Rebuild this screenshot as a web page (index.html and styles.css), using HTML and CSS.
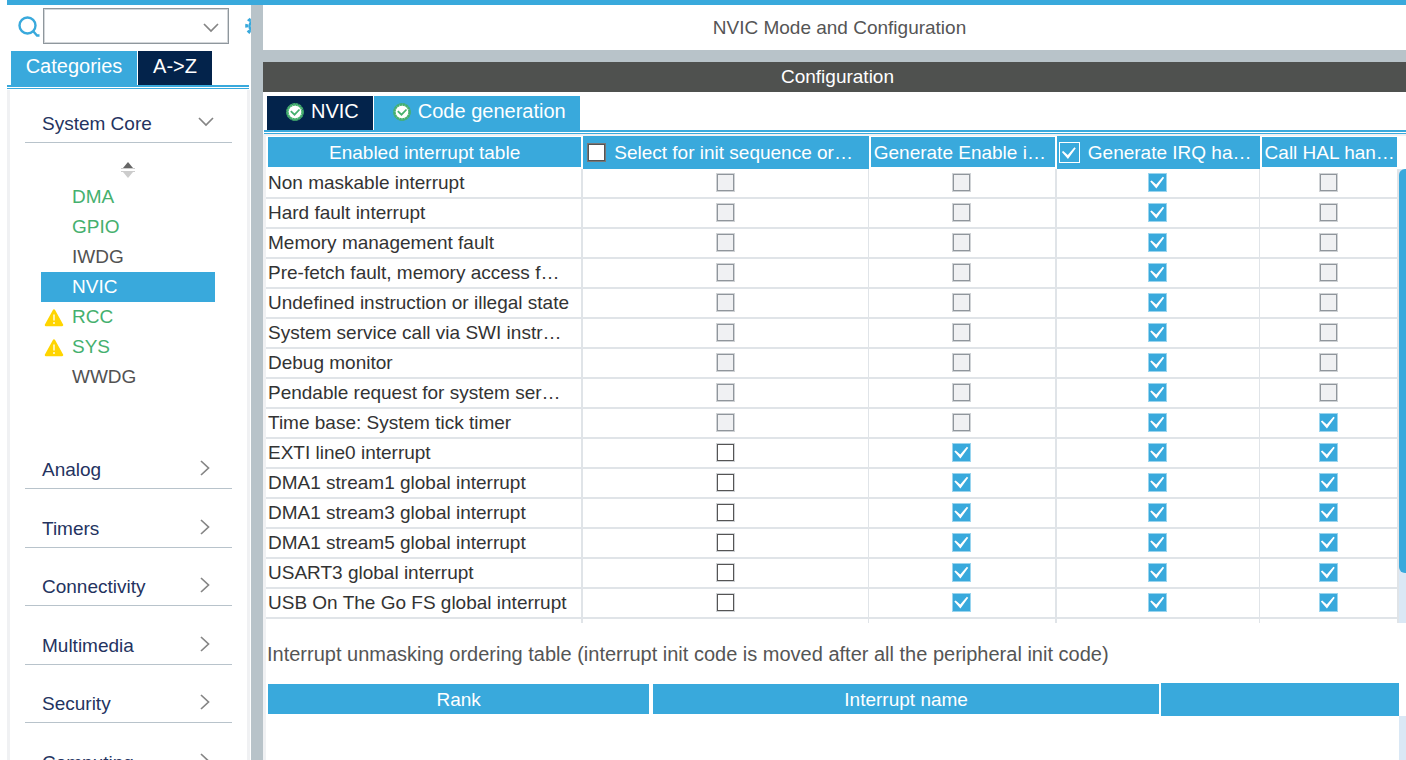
FILE: index.html
```html
<!DOCTYPE html>
<html lang="en">
<head>
<meta charset="utf-8">
<title>NVIC Mode and Configuration</title>
<link rel="stylesheet" href="styles.css">
</head>
<body>
<svg class="defs" aria-hidden="true">
  <symbol id="right" viewBox="0 0 10 16"><path d="M1 1l7.500 7L1 15" fill="none" stroke="#858585" stroke-width="1.700"/></symbol>
  <symbol id="down" viewBox="0 0 16 10"><path d="M1 1l7 7 7-7" fill="none" stroke="#858585" stroke-width="1.700"/></symbol>
  <symbol id="ok" viewBox="0 0 18 18"><circle cx="9" cy="9" r="7.600" fill="#fff" stroke="#45b06e" stroke-width="2.600" stroke-dasharray="2.700 .3"/><path d="M4.800 8.200l3.700 3.500 5-5.200" fill="none" stroke="#45b06e" stroke-width="1.800"/></symbol>
  <symbol id="warn" viewBox="0 0 20 18"><path d="M10 1.500L18 16H2z" fill="#ffd500" stroke="#ffd500" stroke-width="2.500" stroke-linejoin="round"/><path d="M10 5.500v6M10 13v2" stroke="#fff" stroke-width="1.300"/></symbol>
</svg>
<div class="app">
  <aside class="sidebar">
    <div class="search">
      <svg class="search-icon" viewBox="0 0 22 22"><circle cx="9.500" cy="9.500" r="8" fill="none" stroke="#39a9dc" stroke-width="2.400"/><path d="M15 15l4 4.500h2.500" fill="none" stroke="#39a9dc" stroke-width="2.400"/></svg>
      <div class="combo"><input type="text" class="combo-input" aria-label="Search peripherals"><svg class="down"><use href="#down"/></svg></div>
      <button class="gear" aria-label="Settings"><svg viewBox="0 0 20 20"><circle cx="10" cy="10" r="5.500" fill="none" stroke="#39a9dc" stroke-width="2.500"/><circle cx="10" cy="10" r="8.300" fill="none" stroke="#39a9dc" stroke-width="3" stroke-dasharray="3.300 3.220" stroke-dashoffset="1.600"/></svg></button>
    </div>
    <div class="tabs side-tabs"><button class="tab">Categories</button><button class="tab dark">A-&gt;Z</button></div>
    <nav class="tree">
      <button class="group first">System Core<svg class="down"><use href="#down"/></svg></button>
      <div class="members">
        <button class="sort" aria-label="Sort"><svg viewBox="0 0 14 16"><path d="M7 0l5 6H2z" fill="#666"/><path d="M0 6.500h14M0 9.500h14" stroke="#ccc"/><path d="M2 10h10l-5 6z" fill="#ccc"/></svg></button>
        <button class="item on">DMA</button>
        <button class="item on">GPIO</button>
        <button class="item">IWDG</button>
        <button class="item selected">NVIC</button>
        <button class="item on"><svg class="warn"><use href="#warn"/></svg>RCC</button>
        <button class="item on"><svg class="warn"><use href="#warn"/></svg>SYS</button>
        <button class="item">WWDG</button>
      </div>
      <button class="group">Analog<svg class="right"><use href="#right"/></svg></button>
      <button class="group">Timers<svg class="right"><use href="#right"/></svg></button>
      <button class="group short">Connectivity<svg class="right"><use href="#right"/></svg></button>
      <button class="group">Multimedia<svg class="right"><use href="#right"/></svg></button>
      <button class="group short">Security<svg class="right"><use href="#right"/></svg></button>
      <button class="group">Computing<svg class="right"><use href="#right"/></svg></button>
    </nav>
  </aside>
  <main class="main">
    <h1 class="title">NVIC Mode and Configuration</h1>
    <h2 class="bar">Configuration</h2>
    <div class="tabs main-tabs"><button class="tab dark"><svg class="ok"><use href="#ok"/></svg>NVIC</button><button class="tab"><svg class="ok"><use href="#ok"/></svg>Code generation</button></div>
    <div class="panel">
      <div class="scroller">
        <table class="grid">
          <colgroup><col class="c-name"><col class="c-init"><col class="c-enable"><col class="c-irq"><col class="c-hal"></colgroup>
          <thead><tr>
            <th>Enabled interrupt table</th>
            <th class="flush"><label class="pick"><input type="checkbox" class="plain">Select for init sequence or…</label></th>
            <th class="left">Generate Enable i…</th>
            <th class="flush"><label class="pick"><input type="checkbox" class="outlined" checked>Generate IRQ ha…</label></th>
            <th class="left">Call HAL han…</th>
          </tr></thead>
          <tbody>
            <tr><td>Non maskable interrupt</td><td><input type="checkbox" aria-label="Init sequence" disabled></td><td><input type="checkbox" aria-label="Enable" disabled></td><td><input type="checkbox" aria-label="IRQ handler" checked></td><td><input type="checkbox" aria-label="HAL handler" disabled></td></tr>
            <tr><td>Hard fault interrupt</td><td><input type="checkbox" aria-label="Init sequence" disabled></td><td><input type="checkbox" aria-label="Enable" disabled></td><td><input type="checkbox" aria-label="IRQ handler" checked></td><td><input type="checkbox" aria-label="HAL handler" disabled></td></tr>
            <tr><td>Memory management fault</td><td><input type="checkbox" aria-label="Init sequence" disabled></td><td><input type="checkbox" aria-label="Enable" disabled></td><td><input type="checkbox" aria-label="IRQ handler" checked></td><td><input type="checkbox" aria-label="HAL handler" disabled></td></tr>
            <tr><td>Pre-fetch fault, memory access f…</td><td><input type="checkbox" aria-label="Init sequence" disabled></td><td><input type="checkbox" aria-label="Enable" disabled></td><td><input type="checkbox" aria-label="IRQ handler" checked></td><td><input type="checkbox" aria-label="HAL handler" disabled></td></tr>
            <tr><td>Undefined instruction or illegal state</td><td><input type="checkbox" aria-label="Init sequence" disabled></td><td><input type="checkbox" aria-label="Enable" disabled></td><td><input type="checkbox" aria-label="IRQ handler" checked></td><td><input type="checkbox" aria-label="HAL handler" disabled></td></tr>
            <tr><td>System service call via SWI instr…</td><td><input type="checkbox" aria-label="Init sequence" disabled></td><td><input type="checkbox" aria-label="Enable" disabled></td><td><input type="checkbox" aria-label="IRQ handler" checked></td><td><input type="checkbox" aria-label="HAL handler" disabled></td></tr>
            <tr><td>Debug monitor</td><td><input type="checkbox" aria-label="Init sequence" disabled></td><td><input type="checkbox" aria-label="Enable" disabled></td><td><input type="checkbox" aria-label="IRQ handler" checked></td><td><input type="checkbox" aria-label="HAL handler" disabled></td></tr>
            <tr><td>Pendable request for system ser…</td><td><input type="checkbox" aria-label="Init sequence" disabled></td><td><input type="checkbox" aria-label="Enable" disabled></td><td><input type="checkbox" aria-label="IRQ handler" checked></td><td><input type="checkbox" aria-label="HAL handler" disabled></td></tr>
            <tr><td>Time base: System tick timer</td><td><input type="checkbox" aria-label="Init sequence" disabled></td><td><input type="checkbox" aria-label="Enable" disabled></td><td><input type="checkbox" aria-label="IRQ handler" checked></td><td><input type="checkbox" aria-label="HAL handler" checked></td></tr>
            <tr><td>EXTI line0 interrupt</td><td><input type="checkbox" aria-label="Init sequence"></td><td><input type="checkbox" aria-label="Enable" checked></td><td><input type="checkbox" aria-label="IRQ handler" checked></td><td><input type="checkbox" aria-label="HAL handler" checked></td></tr>
            <tr><td>DMA1 stream1 global interrupt</td><td><input type="checkbox" aria-label="Init sequence"></td><td><input type="checkbox" aria-label="Enable" checked></td><td><input type="checkbox" aria-label="IRQ handler" checked></td><td><input type="checkbox" aria-label="HAL handler" checked></td></tr>
            <tr><td>DMA1 stream3 global interrupt</td><td><input type="checkbox" aria-label="Init sequence"></td><td><input type="checkbox" aria-label="Enable" checked></td><td><input type="checkbox" aria-label="IRQ handler" checked></td><td><input type="checkbox" aria-label="HAL handler" checked></td></tr>
            <tr><td>DMA1 stream5 global interrupt</td><td><input type="checkbox" aria-label="Init sequence"></td><td><input type="checkbox" aria-label="Enable" checked></td><td><input type="checkbox" aria-label="IRQ handler" checked></td><td><input type="checkbox" aria-label="HAL handler" checked></td></tr>
            <tr><td>USART3 global interrupt</td><td><input type="checkbox" aria-label="Init sequence"></td><td><input type="checkbox" aria-label="Enable" checked></td><td><input type="checkbox" aria-label="IRQ handler" checked></td><td><input type="checkbox" aria-label="HAL handler" checked></td></tr>
            <tr><td>USB On The Go FS global interrupt</td><td><input type="checkbox" aria-label="Init sequence"></td><td><input type="checkbox" aria-label="Enable" checked></td><td><input type="checkbox" aria-label="IRQ handler" checked></td><td><input type="checkbox" aria-label="HAL handler" checked></td></tr>
            <tr class="tail"><td></td><td></td><td></td><td></td><td></td></tr>
          </tbody>
        </table>
        <div class="track"><div class="thumb"></div></div>
      </div>
      <p class="note">Interrupt unmasking ordering table (interrupt init code is moved after all the peripheral init code)</p>
      <div class="scroller ranks">
        <table class="grid">
          <colgroup><col class="r-rank"><col class="r-name"><col></colgroup>
          <thead><tr><th>Rank</th><th>Interrupt name</th><th class="flush"></th></tr></thead>
        </table>
        <div class="track"></div>
      </div>
    </div>
  </main>
</div>
</body>
</html>
```
FILE: styles.css
```css
* { box-sizing: border-box; }
body {
  margin: 0;
  background: #fff;
  color: #333;
  font: 19px/22px "Liberation Sans", Arial, sans-serif;
  overflow: hidden;
}
button { margin: 0; padding: 0; border: 0; background: none; color: inherit; font: inherit; }
.defs { position: absolute; width: 0; height: 0; }
.app { display: flex; height: 100vh; margin-left: 7px; border-top: 5px solid #39a9dc; }

.sidebar { display: flex; flex-direction: column; flex: none; width: 244px; overflow: hidden; }
.search { display: flex; flex: none; align-items: center; height: 46px; padding: 0 0 4px 11px; }
.search-icon { flex: none; width: 22px; height: 22px; margin: 2px 3px 0 0; }
.combo { display: flex; flex: none; align-items: center; width: 186px; height: 36px; padding: 3px 9px 0 0; border: 1px solid #8f979d; outline: 1px solid #d3d6d9; outline-offset: -2px; }
.combo-input { flex: 1; min-width: 0; height: 100%; padding: 0 6px; border: 0; outline: 0; background: none; font: inherit; }
.gear { flex: none; width: 20px; height: 20px; margin-left: 16px; }
.gear svg { display: block; }
.down { flex: none; width: 16px; height: 10px; }
.right { flex: none; width: 10px; height: 16px; margin: 0 4px 5px 0; }

.tabs { display: flex; flex: none; gap: 1px; position: relative; border-bottom: 2px solid #39a9dc; }
.tabs::after { content: ""; position: absolute; left: 0; right: 0; bottom: -4px; height: 1px; background: #39a9dc; }
.tab { display: flex; align-items: center; height: 34px; padding: 0 14px 4px; background: #39a9dc; color: #fff; font-size: 20px; white-space: nowrap; }
.tab.dark { background: #03234b; }
.side-tabs { margin-right: 2px; padding-left: 4px; }
.side-tabs .tab { flex: 0 0 126px; justify-content: center; padding: 0 0 4px; }
.side-tabs .dark { flex-basis: 74px; }
.tree { display: flex; flex: 1; flex-direction: column; min-height: 0; margin: 3px 1px 0 0; padding: 0 15px; border: solid #f0f1f3; border-width: 0 3px; overflow: hidden; }
.group { display: flex; flex: none; align-items: flex-end; justify-content: space-between; height: 59px; padding: 0 18px 7px 17px; border-bottom: 1px solid #b8c3cb; color: #24335f; }
.group.short { height: 58px; }
.group.first { height: 53px; }
.group .down { margin-bottom: 8px; }
.members { display: flex; flex: none; flex-direction: column; padding: 0 17px 38px 16px; color: #525252; }
.sort { display: flex; align-items: center; justify-content: center; height: 39px; padding-top: 14px; }
.sort svg { width: 14px; height: 16px; }
.item { position: relative; height: 30px; padding-left: 31px; text-align: left; }
.item.on { color: #45b06e; }
.item.selected { background: #39a9dc; color: #fff; }
.warn { position: absolute; left: 3px; top: 7px; width: 20px; height: 18px; }

.main { display: flex; flex: 1; flex-direction: column; min-width: 0; border-left: 12px solid #b8c3c9; }
.title, .bar { flex: none; margin: 0; font-size: 19px; font-weight: 400; text-align: center; }
.title { padding: 12px 0 11px 10px; border-bottom: 12px solid #b8c3c9; color: #555; }
.bar { padding: 4px 0 4px 6px; background: #4f514f; color: #fff; }
.main-tabs { margin-top: 4px; margin-left: 1px; padding-left: 3px; }
.main-tabs .tab { padding-left: 19px; }
.ok { width: 18px; height: 18px; margin: 2px 7px 0 0; }
.panel { flex: 1; min-height: 0; margin-top: 2px; border: solid #f0f1f3; border-width: 2px 0 0 3px; overflow: hidden; }

.scroller { display: flex; }
.grid { flex: 1; align-self: flex-start; min-width: 0; table-layout: fixed; border-collapse: separate; border-spacing: 0; }
.c-name { width: 28%; }
.c-init { width: 25.2%; }
.c-enable { width: 16.6%; }
.c-irq { width: 17.9%; }
.r-rank { width: 34%; }
.r-name { width: 45%; }
th { height: 33px; padding: 2px 2px 0; border: solid #fff; border-width: 1px 2px 2px; background: #39a9dc; color: #fff; font-weight: 400; white-space: nowrap; overflow: hidden; }
th.left { padding-left: 3px; text-align: left; }
th.flush { padding-top: 0; border-width: 0; }
.pick { display: flex; align-items: center; gap: 8px; }
td { height: 30px; padding: 0 0 2px; border: solid #e0e4e8; border-width: 0 1px 2px 0; text-align: center; white-space: nowrap; }
td:nth-child(odd) { border-right-width: 2px; }
td:first-child { padding: 0 0 0 2px; text-align: left; }
.tail td { height: 4px; border-bottom: 0; }
.track { flex: none; width: 7px; margin-top: 33px; background: #dae8f5; overflow: hidden; }
.thumb { width: 14px; height: 89%; border-radius: 6px; background: #39a9dc; }

input[type="checkbox"] { appearance: none; display: block; flex: none; width: 19px; height: 19px; margin: 0 auto; padding: 0; border: 1px solid #d0d3d6; background: #fff; box-shadow: inset 0 0 0 1px #555; }
input[type="checkbox"]:disabled { background: #f0f1f3; box-shadow: inset 0 0 0 1px #90969c; }
input[type="checkbox"]:checked { border-color: #9ad5ef; background: #39a9dc; box-shadow: none; }
input[type="checkbox"]:checked::before { content: ""; display: block; width: 17px; height: 17px; background: #fff; clip-path: polygon(6% 47%, 14% 41%, 41% 64%, 80% 19%, 88% 25%, 42% 88%); }
input.plain[type="checkbox"] { margin: 0 0 0 2px; border-color: #777; }
input.outlined[type="checkbox"] { width: 21px; height: 21px; margin: 0; padding: 1px; border-color: #fff; }

.note { margin: 0; padding: 20px 0 18px 1px; color: #555; font-size: 20px; white-space: nowrap; }
.ranks .track { height: 100px; }
```
